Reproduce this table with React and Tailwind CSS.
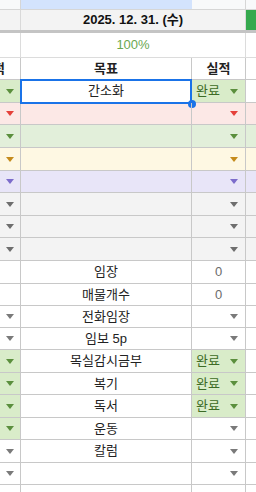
import React from "react";

const FONT = { fontFamily: '"Liberation Sans", "Noto Sans CJK KR", sans-serif' };

function Arrow({ cls }) {
  return (
    <svg width="8" height="5" viewBox="0 0 8 5" className={cls}>
      <polygon points="0,0 8,0 4,5" />
    </svg>
  );
}

const rows = [
  { h: "h-[23px]", rowBg: "bg-white", a: "fill-[#5b8f3d]", aBg: "bg-[#d9ecc9]", b: "간소화", c: "done", sel: true },
  { h: "h-[22px]", rowBg: "bg-[#fce8e6]", a: "fill-[#e5403a]", b: "", c: "fill-[#e5403a]" },
  { h: "h-[23px]", rowBg: "bg-[#e2efda]", a: "fill-[#5b8f3d]", b: "", c: "fill-[#5b8f3d]" },
  { h: "h-[23px]", rowBg: "bg-[#fef8e3]", a: "fill-[#c58b1c]", b: "", c: "fill-[#c58b1c]" },
  { h: "h-[22px]", rowBg: "bg-[#e8e5f8]", a: "fill-[#7c6ccb]", b: "", c: "fill-[#7c6ccb]" },
  { h: "h-[23px]", rowBg: "bg-[#f3f3f3]", a: "fill-[#6e6e6e]", b: "", c: "fill-[#6e6e6e]" },
  { h: "h-[22px]", rowBg: "bg-[#f3f3f3]", a: "fill-[#6e6e6e]", b: "", c: "fill-[#6e6e6e]" },
  { h: "h-[23px]", rowBg: "bg-[#f3f3f3]", a: "fill-[#6e6e6e]", b: "", c: "fill-[#6e6e6e]" },
  { h: "h-[23px]", rowBg: "bg-white", a: null, b: "임장", c: "zero" },
  { h: "h-[22px]", rowBg: "bg-white", a: null, b: "매물개수", c: "zero" },
  { h: "h-[22px]", rowBg: "bg-white", a: "fill-[#7a7a7a]", b: "전화임장", c: "fill-[#7a7a7a]" },
  { h: "h-[22px]", rowBg: "bg-white", a: "fill-[#7a7a7a]", b: "임보 5p", c: "fill-[#7a7a7a]" },
  { h: "h-[23px]", rowBg: "bg-white", a: "fill-[#5b8f3d]", aBg: "bg-[#d9ecc9]", b: "목실감시금부", c: "done" },
  { h: "h-[22px]", rowBg: "bg-white", a: "fill-[#5b8f3d]", aBg: "bg-[#d9ecc9]", b: "복기", c: "done" },
  { h: "h-[23px]", rowBg: "bg-white", a: "fill-[#5b8f3d]", aBg: "bg-[#d9ecc9]", b: "독서", c: "done" },
  { h: "h-[22px]", rowBg: "bg-white", a: "fill-[#5b8f3d]", aBg: "bg-[#d9ecc9]", b: "운동", c: "fill-[#7a7a7a]" },
  { h: "h-[23px]", rowBg: "bg-white", a: "fill-[#7a7a7a]", b: "칼럼", c: "fill-[#7a7a7a]" },
  { h: "h-[22px]", rowBg: "bg-white", a: "fill-[#7a7a7a]", b: "", c: "fill-[#7a7a7a]" },
];

function BodyRow({ r }) {
  const isDone = r.c === "done";
  return (
    <div className={`flex ${r.h} border-b border-[#c8c8c8] ${r.rowBg}`}>
      <div className={`w-[21px] shrink-0 border-r border-[#c8c8c8] flex items-center justify-center ${r.aBg || ""}`}>
        {r.a && <Arrow cls={r.a} />}
      </div>
      <div className="relative w-[171px] shrink-0 border-r border-[#c8c8c8] flex items-center justify-center text-[13px] text-[#222]">
        {r.b}
        {r.sel && (
          <>
            <div className="absolute left-[-1px] top-[-1px] right-[-1px] bottom-[-2px] border-2 border-[#1a73e8]" />
            <div className="absolute right-[-5px] bottom-[-6px] w-[8px] h-[8px] rounded-full bg-[#1a73e8]" />
          </>
        )}
      </div>
      <div className={`w-[54px] shrink-0 border-r border-[#c8c8c8] flex items-center ${isDone ? "bg-[#d9ecc9]" : ""}`}>
        {isDone && (
          <div className="flex w-full items-center justify-between pl-[4px] pr-[7px]">
            <span className="text-[13px] text-[#3c6b25]">완료</span>
            <Arrow cls="fill-[#5b8f3d]" />
          </div>
        )}
        {r.c === "zero" && <span className="w-full text-center text-[13px] text-[#6b6b6b]">0</span>}
        {!isDone && r.c && r.c !== "zero" && (
          <div className="flex w-full justify-end pr-[7px]">
            <Arrow cls={r.c} />
          </div>
        )}
      </div>
      <div className="flex-1" />
    </div>
  );
}

export default function App() {
  return (
    <div className="w-[256px] h-[492px] overflow-hidden bg-white" style={FONT}>
      {/* column header strip */}
      <div className="flex h-[10px] border-b border-[#d6d6d6] bg-[#f8f9fa]">
        <div className="w-[21px] shrink-0 border-r border-[#d6d6d6]" />
        <div className="w-[171px] shrink-0 bg-[#d3e3fd]" />
        <div className="w-[54px] shrink-0 border-r border-[#d6d6d6]" />
        <div className="flex-1" />
      </div>
      {/* date row */}
      <div className="flex h-[23px] border-b-[3px] border-[#c4c4c4] bg-[#f3f3f3]">
        <div className="w-[21px] shrink-0 border-r border-[#d9d9d9]" />
        <div className="w-[225px] shrink-0 border-r border-[#d9d9d9] flex items-center justify-center text-[13px] font-bold text-[#111]">
          2025. 12. 31. (수)
        </div>
        <div className="flex-1 bg-[#35a94e]" />
      </div>
      {/* percent row */}
      <div className="flex h-[25px] border-b border-[#dcdcdc] bg-white">
        <div className="w-[21px] shrink-0 border-r border-[#dcdcdc]" />
        <div className="w-[225px] shrink-0 border-r border-[#dcdcdc] flex items-center justify-center text-[13px] text-[#6aa84f]">
          100%
        </div>
        <div className="flex-1" />
      </div>
      {/* header row */}
      <div className="flex h-[22px] border-b border-[#c8c8c8] bg-white">
        <div className="w-[21px] shrink-0 border-r border-[#c8c8c8] overflow-hidden flex items-center">
          <div className="w-[54px] shrink-0 ml-[-34px] text-center text-[13px] font-bold text-[#222]">실적</div>
        </div>
        <div className="w-[171px] shrink-0 border-r border-[#c8c8c8] flex items-center justify-center text-[13px] font-bold text-[#222]">
          목표
        </div>
        <div className="w-[54px] shrink-0 border-r border-[#c8c8c8] flex items-center justify-center text-[13px] font-bold text-[#222]">
          실적
        </div>
        <div className="flex-1" />
      </div>
      {rows.map((r, i) => (
        <BodyRow key={i} r={r} />
      ))}
      <div className="flex h-[10px] bg-white">
        <div className="w-[21px] shrink-0 border-r border-[#c8c8c8]" />
        <div className="w-[171px] shrink-0 border-r border-[#c8c8c8]" />
        <div className="w-[54px] shrink-0 border-r border-[#c8c8c8]" />
        <div className="flex-1" />
      </div>
    </div>
  );
}
